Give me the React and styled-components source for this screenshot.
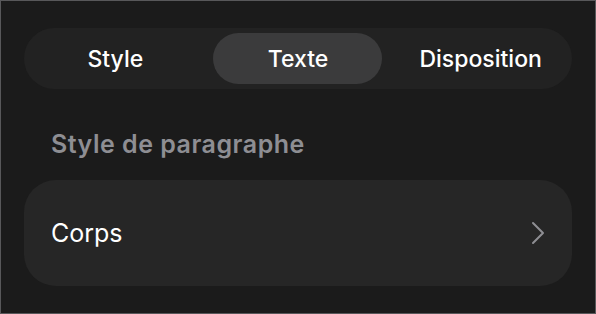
import React, { useState } from "react";
import styled, { createGlobalStyle } from "styled-components";

const GlobalStyle = createGlobalStyle`
  html, body {
    margin: 0;
    padding: 0;
    background: #1b1b1b;
  }
  * {
    box-sizing: border-box;
  }
`;

export const Panel = styled.div`
  width: 596px;
  height: 314px;
  border: 1px solid #58585a;
  background: #1b1b1b;
  padding: 27px 23px 0 23px;
  font-family: Inter, "Noto Sans", "Liberation Sans", sans-serif;
  color: #fff;
`;

export const Segmented = styled.div`
  display: grid;
  grid-template-columns: repeat(3, 1fr);
  height: 61px;
  padding: 5px 0;
  border-radius: 31px;
  background: #222222;
`;

export const Segment = styled.button`
  display: flex;
  align-items: center;
  justify-content: center;
  width: 169px;
  justify-self: center;
  border: none;
  border-radius: 26px;
  background: ${({ active }) => (active ? "#3b3b3c" : "transparent")};
  color: #fff;
  font-family: inherit;
  font-size: 23px;
  font-weight: 500;
  cursor: pointer;
  padding: 0;
`;

export const SectionTitle = styled.div`
  margin: 38px 0 0 27px;
  height: 34px;
  color: #8e8e93;
  font-size: 25px;
  font-weight: 600;
  letter-spacing: 0.5px;
  line-height: 34px;
`;

export const Card = styled.div`
  display: flex;
  align-items: center;
  justify-content: space-between;
  height: 106px;
  margin-top: 19px;
  padding: 0 27px 0 27px;
  border-radius: 32px;
  background: #262626;
`;

export const CardLabel = styled.span`
  font-size: 25px;
  font-weight: 400;
`;

export const Chevron = styled.svg`
  width: 14px;
  height: 24px;
`;

const tabs = ["Style", "Texte", "Disposition"];

const App = () => {
  const [tab, setTab] = useState("Texte");

  return (
    <>
      <GlobalStyle />
      <Panel>
        <Segmented>
          {tabs.map((t) => (
            <Segment key={t} active={t === tab} onClick={() => setTab(t)}>
              {t}
            </Segment>
          ))}
        </Segmented>
        <SectionTitle>Style de paragraphe</SectionTitle>
        <Card>
          <CardLabel>Corps</CardLabel>
          <Chevron viewBox="0 0 14 24" fill="none">
            <path
              d="M2 2 L12 12 L2 22"
              stroke="#8e8e93"
              strokeWidth="2"
              strokeLinecap="round"
              strokeLinejoin="round"
            />
          </Chevron>
        </Card>
      </Panel>
    </>
  );
};

export default App;
